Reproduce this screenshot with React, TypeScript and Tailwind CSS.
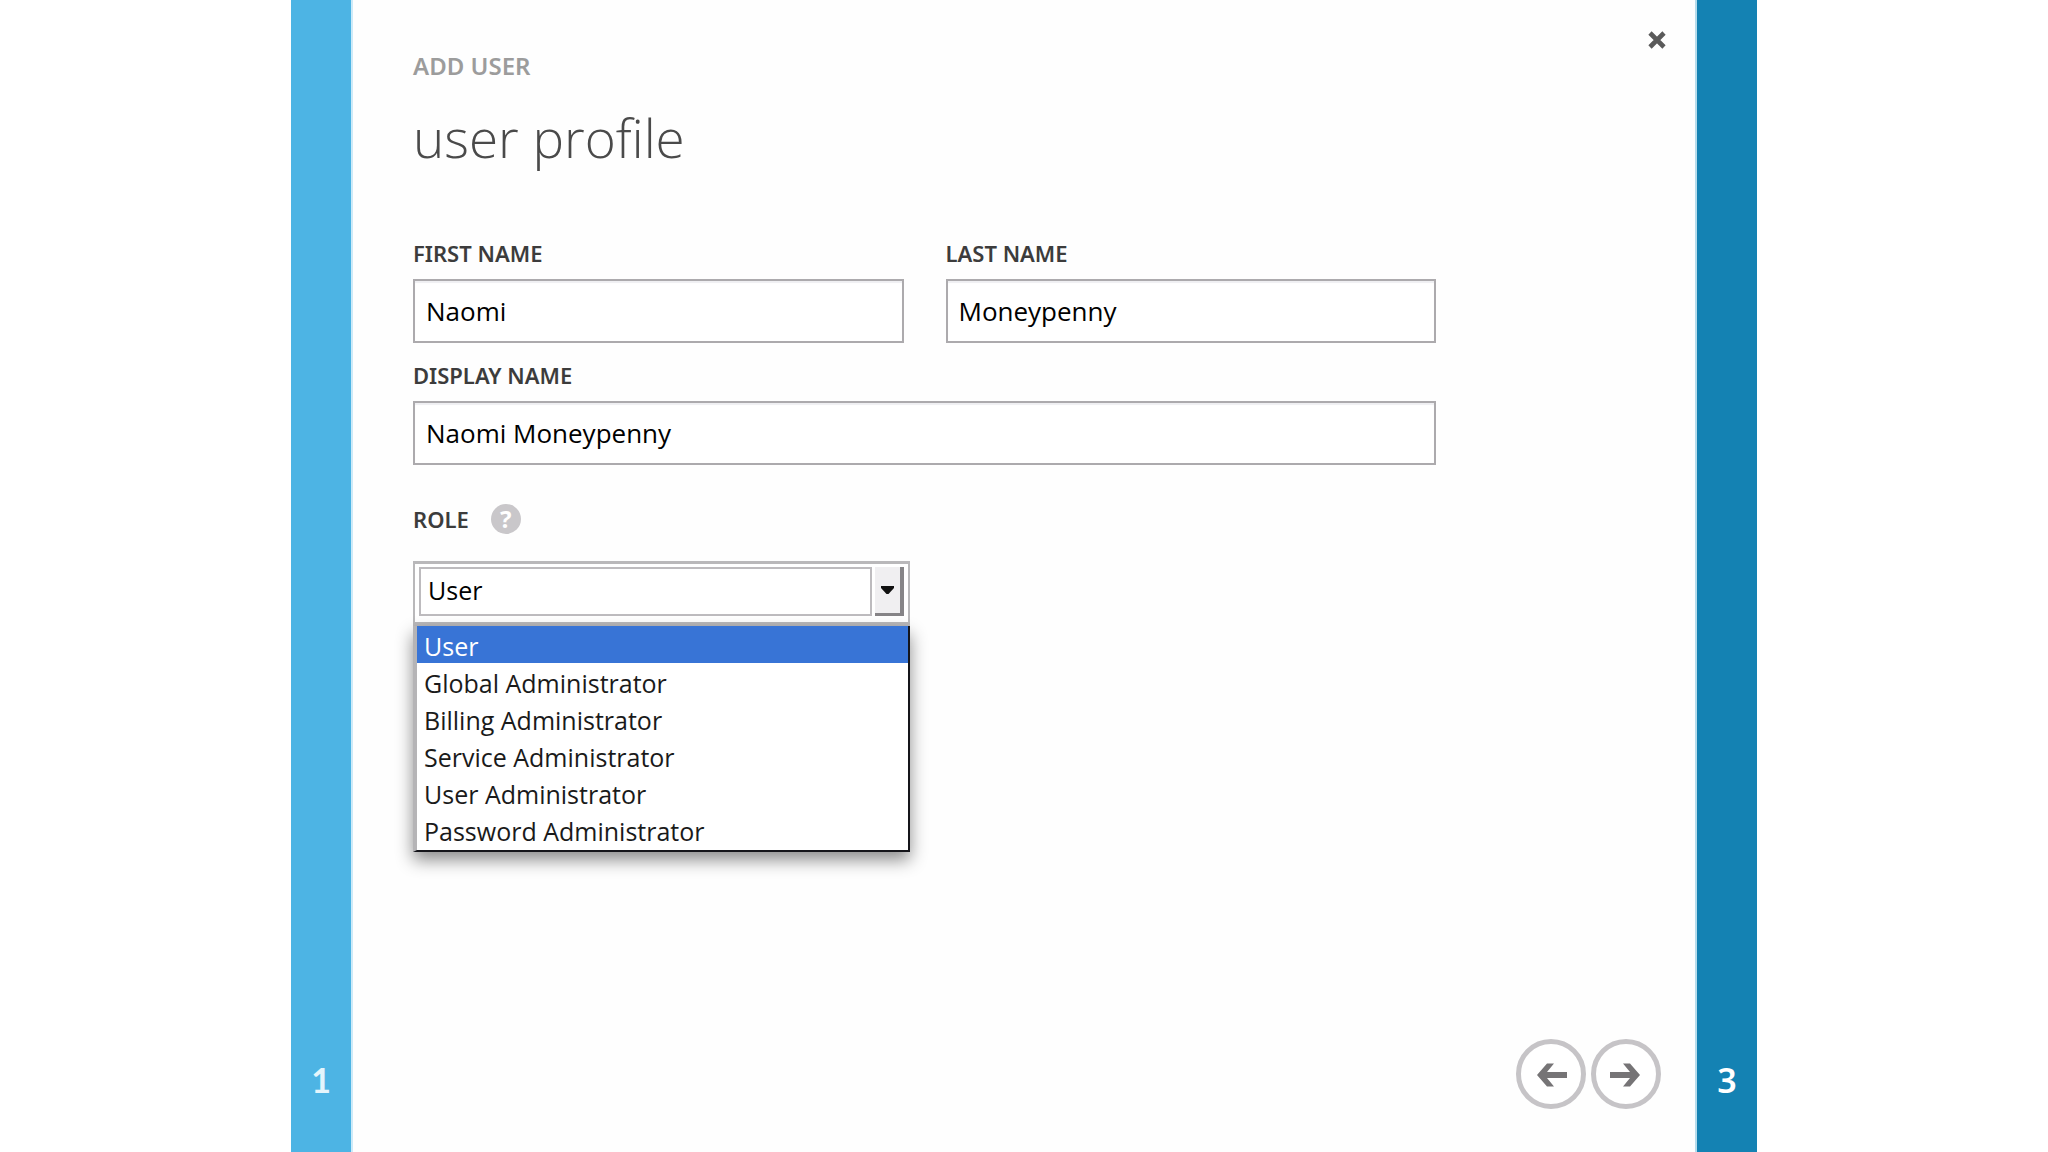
import { useState } from 'react';
import type { ReactNode } from 'react';

const ROLES = [
  'User',
  'Global Administrator',
  'Billing Administrator',
  'Service Administrator',
  'User Administrator',
  'Password Administrator',
];

const labelClass =
  'block text-[22px] leading-7 font-semibold text-[#3c3c3c] whitespace-nowrap';
const inputClass =
  "block w-full h-16 px-[11px] border-2 border-[#acaaad] bg-white font-['Open_Sans','Noto_Sans',sans-serif] text-[26px] text-black shadow-[inset_0_2px_1px_#efeff2] outline-none";

interface FieldProps {
  id: string;
  label: string;
  value: string;
  onChange: (value: string) => void;
}

function Field({ id, label, value, onChange }: FieldProps) {
  return (
    <div>
      <label htmlFor={id} className={labelClass}>
        {label}
      </label>
      <input
        id={id}
        type="text"
        value={value}
        onChange={(e) => onChange(e.target.value)}
        className={`${inputClass} mt-3`}
      />
    </div>
  );
}

interface NavButtonProps {
  label: string;
  children: ReactNode;
}

function NavButton({ label, children }: NavButtonProps) {
  return (
    <button
      type="button"
      aria-label={label}
      className="flex items-center justify-center size-[70px] rounded-full border-[5px] border-[#c6c4c7] bg-white"
    >
      {children}
    </button>
  );
}

export default function App() {
  const [firstName, setFirstName] = useState('Naomi');
  const [lastName, setLastName] = useState('Moneypenny');
  const [displayName, setDisplayName] = useState('Naomi Moneypenny');
  const [role, setRole] = useState('User');

  return (
    <div className="min-h-screen flex justify-center bg-white font-['Noto_Sans','Open_Sans',sans-serif]">
      <div className="flex w-full max-w-[1466px]">
        {/* Previous step */}
        <aside className="w-[62px] shrink-0 flex flex-col justify-end items-center pb-12 bg-[#4db4e4] border-r-2 border-[#cdeaf8] font-['Lato',sans-serif] text-[34px] leading-12 font-bold text-[#e4f5fc]">
          1
        </aside>

        <main className="flex-1 flex flex-col pl-[60px] bg-[#fefefe]">
          <header className="flex items-start justify-between pr-[29px]">
            <div className="pt-12">
              <p className="text-2xl leading-9 font-semibold text-[#9c9c9c]">ADD USER</p>
              <h1 className="mt-4 font-['Open_Sans','Noto_Sans',sans-serif] text-[53px] leading-[76px] font-light text-[#4a4a4a]">
                user profile
              </h1>
            </div>
            <button type="button" aria-label="Close" className="mt-[31px]">
              <svg viewBox="0 0 18 18" className="size-[18px]" stroke="#5a5a5a" strokeWidth="4.6">
                <path d="M2 2L16 16M16 2L2 16" />
              </svg>
            </button>
          </header>

          <form className="mt-[63px] w-full max-w-[1023px]">
            <div className="grid grid-cols-2 gap-x-[42px]">
              <Field id="first-name" label="FIRST NAME" value={firstName} onChange={setFirstName} />
              <Field id="last-name" label="LAST NAME" value={lastName} onChange={setLastName} />
            </div>
            <div className="mt-[18px]">
              <Field
                id="display-name"
                label="DISPLAY NAME"
                value={displayName}
                onChange={setDisplayName}
              />
            </div>

            <div className="mt-[39px] flex items-center gap-[22px]">
              <label htmlFor="role" className={labelClass}>
                ROLE
              </label>
              <button
                type="button"
                aria-label="About roles"
                className="size-[30px] rounded-full bg-[#c9c7ca] text-2xl leading-[30px] font-bold text-white text-center"
              >
                ?
              </button>
            </div>

            {/* Role combo box with its list open */}
            <div className="relative mt-[27px] w-[497px]">
              <div className="flex gap-[3px] h-[65px] pt-[3px] px-1 pb-[6px] border-x-2 border-t-[3px] border-b-4 border-[#b9b8ba] bg-white">
                <select
                  id="role"
                  value={role}
                  onChange={(e) => setRole(e.target.value)}
                  className="flex-1 appearance-none px-[7px] pb-1 border-2 border-[#bdbbbe] bg-white font-['Open_Sans','Noto_Sans',sans-serif] text-[25px] leading-8 text-black outline-none"
                >
                  {ROLES.map((name) => (
                    <option key={name}>{name}</option>
                  ))}
                </select>
                <span className="flex items-center justify-center w-[29px] bg-[#f0eff1] border-r-4 border-b-[3px] border-[#868487]">
                  <svg viewBox="0 0 13 8" className="w-[13px] h-2" fill="#111">
                    <path d="M0 0H13V2L7.500 8H5.500L0 2Z" />
                  </svg>
                </span>
              </div>
              <ul
                role="listbox"
                aria-label="Role"
                className="absolute top-full inset-x-0 pb-[2px] border-l-4 border-l-[#b5b4b6] border-r-2 border-r-[#15151a] border-b-2 border-b-[#15151a] bg-white font-['Open_Sans','Noto_Sans',sans-serif] text-[25px] leading-[41px] text-[#1a1a1a] shadow-[0_8px_16px_rgba(0,0,0,0.45)]"
              >
                {ROLES.map((name) => (
                  <li
                    key={name}
                    role="option"
                    aria-selected={name === role}
                    onClick={() => setRole(name)}
                    className={name === role ? 'h-[37px] px-[7px] bg-[#3874d6] text-white' : 'h-[37px] px-[7px]'}
                  >
                    {name}
                  </li>
                ))}
              </ul>
            </div>
          </form>

          <footer className="mt-auto pb-[43px] pr-[34px] flex justify-end gap-[5px]">
            <NavButton label="Back">
              <svg viewBox="0 0 32 26" className="w-8 h-[26px]" fill="#767476">
                <path d="M2 14L12 2.500H19L12 11H32V17H12L19 25.500H12Z" />
              </svg>
            </NavButton>
            <NavButton label="Next">
              <svg viewBox="0 0 32 26" className="w-8 h-[26px]" fill="#767476">
                <path d="M30 14L20 2.500H13L20 11H0V17H20L13 25.500H20Z" />
              </svg>
            </NavButton>
          </footer>
        </main>

        {/* Next step */}
        <aside className="w-[62px] shrink-0 flex flex-col justify-end items-center pb-12 bg-[#1482b3] border-l-2 border-[#b5dcec] text-[34px] leading-12 font-semibold text-white">
          3
        </aside>
      </div>
    </div>
  );
}
